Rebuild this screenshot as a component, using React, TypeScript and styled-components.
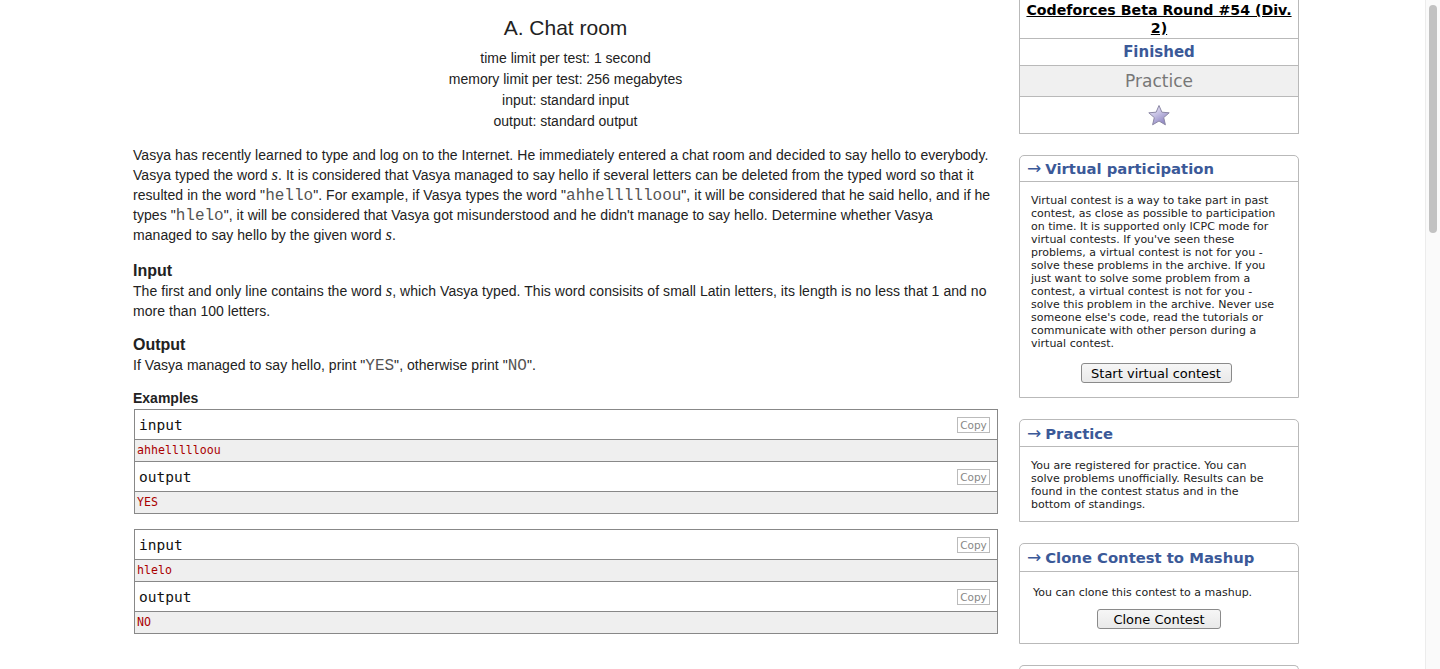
import React from "react";
import styled, { createGlobalStyle } from "styled-components";

const Global = createGlobalStyle`
  html, body { margin: 0; padding: 0; background: #fff; overflow: hidden; }
  body { font-family: "Liberation Sans", Arial, sans-serif; color: #222; }
`;

const Page = styled.div`
  display: flex;
  align-items: flex-start;
  gap: 21px;
  padding-left: 133px;
  width: 1425px;
  box-sizing: border-box;
`;

const Main = styled.main`
  width: 865px;
  padding-top: 16px;
  font-size: 14px;
`;

const Header = styled.header`
  text-align: center;
`;

const Title = styled.h1`
  margin: 0 0 8px;
  font-size: 21px;
  line-height: 24px;
  font-weight: normal;
  color: #222;
`;

const Limit = styled.div`
  font-size: 14px;
  line-height: 21px;
`;

const Para = styled.p<{ $top?: number }>`
  margin: ${(p) => p.$top ?? 0}px 0 0;
  max-width: 860px;
  line-height: 20px;
  letter-spacing: 0.05px;
`;

const Section = styled.section<{ $top: number }>`
  margin-top: ${(p) => p.$top}px;
`;

const SectionTitle = styled.div<{ $size: number }>`
  font-weight: bold;
  font-size: ${(p) => p.$size}px;
  line-height: 20px;
`;

const Math = styled.span`
  font-family: "Liberation Serif", "Times New Roman", serif;
  font-style: italic;
  font-size: 16.5px;
  line-height: 1;
`;

const Code = styled.span`
  font-family: "Liberation Mono", "Courier New", monospace;
  font-size: 16px;
  line-height: 1;
  letter-spacing: 0;
  color: #555;
`;

const Examples = styled.div`
  margin-top: 1px;
  display: flex;
  flex-direction: column;
  gap: 15px;
`;

const SampleBox = styled.div`
  border: 1px solid #888;
  margin-left: 1px;
`;

const SampleTitle = styled.div<{ $first?: boolean }>`
  display: flex;
  align-items: center;
  justify-content: space-between;
  height: 29px;
  padding: 0 7px 0 4px;
  border-bottom: 1px solid #888;
  border-top: ${(p) => (p.$first ? "none" : "1px solid #888")};
  font-family: "DejaVu Sans Mono", Consolas, monospace;
  font-size: 14.5px;
  color: #111;
`;

const CopyBtn = styled.span`
  display: inline-flex;
  align-items: center;
  justify-content: center;
  width: 31px;
  height: 14px;
  border: 1px solid #bbb;
  font-family: "DejaVu Sans", Verdana, sans-serif;
  font-size: 10.5px;
  color: #888;
`;

const SampleData = styled.pre`
  margin: 0;
  padding: 3px 2px;
  line-height: 15px;
  background: #efefef;
  font-family: "DejaVu Sans Mono", Consolas, monospace;
  font-size: 11.6px;
  color: #a00;
`;

const Sidebar = styled.aside`
  width: 280px;
  display: flex;
  flex-direction: column;
  gap: 21px;
  font-family: "DejaVu Sans", Verdana, sans-serif;
`;

const RoundTable = styled.div`
  border: 1px solid #b9b9b9;
  border-top: none;
  text-align: center;
`;

const RoundRow = styled.div<{ $h: number; $bg?: string }>`
  height: ${(p) => p.$h}px;
  display: flex;
  align-items: center;
  justify-content: center;
  background: ${(p) => p.$bg ?? "#fff"};
  border-bottom: 1px solid #b9b9b9;
  &:last-child { border-bottom: none; }
`;

const RoundName = styled.a`
  display: block;
  padding: 0 4px;
  font-weight: bold;
  font-size: 14.2px;
  line-height: 18px;
  color: #000;
  text-decoration: underline;
`;

const Finished = styled.span`
  font-weight: bold;
  font-size: 15px;
  color: #3b5998;
`;

const PracticeLabel = styled.span`
  font-size: 17px;
  color: #777;
`;

const Box = styled.div`
  border: 1px solid #b9b9b9;
  border-radius: 5px 5px 0 0;
`;

const BoxHead = styled.div<{ $h: number }>`
  height: ${(p) => p.$h}px;
  display: flex;
  align-items: center;
  gap: 4px;
  padding-left: 7px;
  border-bottom: 1px solid #b9b9b9;
  color: #3b5998;
`;

const Arrow = styled.span`
  font-size: 17px;
  line-height: 1;
`;

const BoxTitle = styled.span`
  font-weight: bold;
  font-size: 14.8px;
`;

const BoxBody = styled.div<{ $pad: string; $center?: boolean }>`
  padding: ${(p) => p.$pad};
  font-size: 11px;
  line-height: 13px;
  color: #222;
  text-align: ${(p) => (p.$center ? "center" : "left")};
`;

const BodyText = styled.div<{ $left?: boolean }>`
  text-align: left;
  padding-left: ${(p) => (p.$left ? 2 : 0)}px;
`;

const Button = styled.button<{ $w: number; $top: number }>`
  display: block;
  margin: ${(p) => p.$top}px auto 0;
  width: ${(p) => p.$w}px;
  height: 20px;
  padding: 0;
  font-family: "DejaVu Sans", Verdana, sans-serif;
  font-size: 13px;
  color: #000;
  background: linear-gradient(#f6f6f6, #e9e9e9);
  border: 1px solid #8a8a8a;
  border-radius: 3px;
`;

const NextBox = styled.div`
  height: 10px;
  border: 1px solid #b9b9b9;
  border-bottom: none;
  border-radius: 5px 5px 0 0;
`;

const Scrollbar = styled.div`
  position: fixed;
  top: 0;
  right: 0;
  width: 14px;
  height: 100vh;
  background: #fafafa;
  border-left: 1px solid #ececec;
`;

const Thumb = styled.div`
  margin: 5px 0 0 3px;
  width: 8px;
  height: 228px;
  border-radius: 4px;
  background: #c2c2c2;
`;

const Star = () => (
  <svg width="24" height="23" viewBox="0 0 24 23">
    <defs>
      <linearGradient id="sg" x1="0" y1="0" x2="0.6" y2="1">
        <stop offset="0" stopColor="#f4f2fb" />
        <stop offset="0.5" stopColor="#c6c1e4" />
        <stop offset="1" stopColor="#8f86c2" />
      </linearGradient>
    </defs>
    <path
      d="M12 1.5 L14.9 8.2 L22.2 8.8 L16.7 13.6 L18.4 20.8 L12 17 L5.6 20.8 L7.3 13.6 L1.8 8.8 L9.1 8.2 Z"
      fill="url(#sg)"
      stroke="#8c88a6"
      strokeWidth="1"
      strokeLinejoin="round"
    />
  </svg>
);

const samples = [
  { input: "ahhellllloou", output: "YES" },
  { input: "hlelo", output: "NO" },
];

export default function App() {
  return (
    <>
      <Global />
      <Page>
        <Main>
          <Header>
            <Title>A. Chat room</Title>
            <Limit>time limit per test: 1 second</Limit>
            <Limit>memory limit per test: 256 megabytes</Limit>
            <Limit>input: standard input</Limit>
            <Limit>output: standard output</Limit>
          </Header>
          <Para $top={13}>
            Vasya has recently learned to type and log on to the Internet. He immediately entered a chat room and
            decided to say hello to everybody. Vasya typed the word <Math>s</Math>. It is considered that Vasya
            managed to say hello if several letters can be deleted from the typed word so that it resulted in the
            word "<Code>hello</Code>". For example, if Vasya types the word "<Code>ahhellllloou</Code>", it will be
            considered that he said hello, and if he types "<Code>hlelo</Code>", it will be considered that Vasya
            got misunderstood and he didn't manage to say hello. Determine whether Vasya managed to say hello by the
            given word <Math>s</Math>.
          </Para>
          <Section $top={16}>
            <SectionTitle $size={16}>Input</SectionTitle>
            <Para>
              The first and only line contains the word <Math>s</Math>, which Vasya typed. This word consisits of
              small Latin letters, its length is no less that 1 and no more than 100 letters.
            </Para>
          </Section>
          <Section $top={14}>
            <SectionTitle $size={16}>Output</SectionTitle>
            <Para>
              If Vasya managed to say hello, print "<Code>YES</Code>", otherwise print "<Code>NO</Code>".
            </Para>
          </Section>
          <Section $top={13}>
            <SectionTitle $size={14}>Examples</SectionTitle>
            <Examples>
              {samples.map((s, i) => (
                <SampleBox key={i}>
                  <SampleTitle $first>
                    input<CopyBtn>Copy</CopyBtn>
                  </SampleTitle>
                  <SampleData>{s.input}</SampleData>
                  <SampleTitle>
                    output<CopyBtn>Copy</CopyBtn>
                  </SampleTitle>
                  <SampleData>{s.output}</SampleData>
                </SampleBox>
              ))}
            </Examples>
          </Section>
        </Main>
        <Sidebar>
          <RoundTable>
            <RoundRow $h={38}>
              <RoundName>Codeforces Beta Round #54 (Div. 2)</RoundName>
            </RoundRow>
            <RoundRow $h={26}>
              <Finished>Finished</Finished>
            </RoundRow>
            <RoundRow $h={30} $bg="#f0f0f0">
              <PracticeLabel>Practice</PracticeLabel>
            </RoundRow>
            <RoundRow $h={36}>
              <Star />
            </RoundRow>
          </RoundTable>
          <Box>
            <BoxHead $h={25}>
              <Arrow>→</Arrow>
              <BoxTitle>Virtual participation</BoxTitle>
            </BoxHead>
            <BoxBody $pad="12px 17px 14px 11px" $center>
              <BodyText>
                Virtual contest is a way to take part in past contest, as close as possible to participation on time.
                It is supported only ICPC mode for virtual contests. If you've seen these problems, a virtual contest
                is not for you - solve these problems in the archive. If you just want to solve some problem from a
                contest, a virtual contest is not for you - solve this problem in the archive. Never use someone
                else's code, read the tutorials or communicate with other person during a virtual contest.
              </BodyText>
              <Button $w={151} $top={13}>Start virtual contest</Button>
            </BoxBody>
          </Box>
          <Box>
            <BoxHead $h={26}>
              <Arrow>→</Arrow>
              <BoxTitle>Practice</BoxTitle>
            </BoxHead>
            <BoxBody $pad="12px 23px 10px 11px">
              You are registered for practice. You can solve problems unofficially. Results can be found in the
              contest status and in the bottom of standings.
            </BoxBody>
          </Box>
          <Box>
            <BoxHead $h={27}>
              <Arrow>→</Arrow>
              <BoxTitle>Clone Contest to Mashup</BoxTitle>
            </BoxHead>
            <BoxBody $pad="14px 11px 14px 11px" $center>
              <BodyText $left>You can clone this contest to a mashup.</BodyText>
              <Button $w={124} $top={10}>Clone Contest</Button>
            </BoxBody>
          </Box>
          <NextBox />
        </Sidebar>
      </Page>
      <Scrollbar>
        <Thumb />
      </Scrollbar>
    </>
  );
}
